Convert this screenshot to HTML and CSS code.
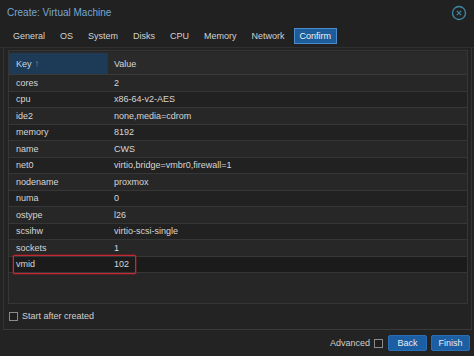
FILE: index.html
```html
<!DOCTYPE html>
<html>
<head>
<meta charset="utf-8">
<link rel="stylesheet" href="styles.css">
</head>
<body>
<div class="win">
  <div class="titlebar">
    <span class="title">Create: Virtual Machine</span>
    <span class="close">
      <svg width="16" height="16" viewBox="0 0 16 16"><circle cx="8" cy="8" r="6.5" fill="none" stroke="#3f8aa6" stroke-width="1.3"/><path d="M5.8 5.8 L10.2 10.2 M10.2 5.8 L5.8 10.2" stroke="#3f8aa6" stroke-width="1.2"/></svg>
    </span>
  </div>
  <div class="tabs">
    <span class="tab">General</span>
    <span class="tab">OS</span>
    <span class="tab">System</span>
    <span class="tab">Disks</span>
    <span class="tab">CPU</span>
    <span class="tab">Memory</span>
    <span class="tab">Network</span>
    <span class="tab active">Confirm</span>
  </div>
  <div class="panel">
    <div class="grid">
      <div class="ghead">
        <div class="c key">Key <span class="arrow">↑</span></div>
        <div class="c val">Value</div>
      </div>
      <div class="row"><div class="c key">cores</div><div class="c val">2</div></div>
      <div class="row dark"><div class="c key">cpu</div><div class="c val">x86-64-v2-AES</div></div>
      <div class="row"><div class="c key">ide2</div><div class="c val">none,media=cdrom</div></div>
      <div class="row dark"><div class="c key">memory</div><div class="c val">8192</div></div>
      <div class="row"><div class="c key">name</div><div class="c val">CWS</div></div>
      <div class="row dark"><div class="c key">net0</div><div class="c val">virtio,bridge=vmbr0,firewall=1</div></div>
      <div class="row"><div class="c key">nodename</div><div class="c val">proxmox</div></div>
      <div class="row dark"><div class="c key">numa</div><div class="c val">0</div></div>
      <div class="row"><div class="c key">ostype</div><div class="c val">l26</div></div>
      <div class="row dark"><div class="c key">scsihw</div><div class="c val">virtio-scsi-single</div></div>
      <div class="row"><div class="c key">sockets</div><div class="c val">1</div></div>
      <div class="row hl"><div class="c key">vmid</div><div class="c val">102</div><span class="mark"></span></div>
      <div class="filler"></div>
    </div>
    <div class="start"><span class="cb"></span><span>Start after created</span></div>
  </div>
  <div class="footer">
    <span class="adv">Advanced</span>
    <span class="cb"></span>
    <span class="btn back">Back</span>
    <span class="btn">Finish</span>
  </div>
</div>
</body>
</html>
```

FILE: styles.css
```css
* { box-sizing: border-box; }
html, body { margin: 0; padding: 0; }
body {
  width: 474px;
  height: 356px;
  background: #232323;
  font-family: "Liberation Sans", Arial, sans-serif;
  font-size: 9px;
  color: #d6d6d6;
  overflow: hidden;
}
.win { display: flex; flex-direction: column; height: 356px; }
.titlebar {
  height: 24px;
  display: flex;
  align-items: center;
  justify-content: space-between;
  padding: 0 7px 0 7px;
  background: #212121;
}
.title { font-size: 10px; color: #78a8d0; }
.close { display: flex; width: 16px; height: 16px; margin-top: 1px; }
.tabs {
  height: 24px;
  display: flex;
  align-items: flex-start;
  gap: 3px;
  padding: 4px 0 0 7px;
  border-bottom: 1px solid #303030;
  background: #212121;
}
.tab {
  height: 16px;
  line-height: 14px;
  padding: 0 5px;
  border: 1px solid transparent;
  color: #d2d2d2;
}
.tab.active {
  background: #1c5c98;
  border-color: #4a8ccc;
  color: #f2f2f2;
}
.panel {
  flex: 0 0 282px;
  margin: 0 2px 0 3px;
  border-left: 1px solid #333;
  border-right: 1px solid #333;
  border-bottom: 1px solid #3a3a3a;
  padding: 2px 3px 0 4px;
}
.grid {
  height: 254px;
  border: 1px solid #363636;
  display: flex;
  flex-direction: column;
  padding: 1px 0 0 0;
  background: #262626;
}
.ghead {
  height: 23px;
  display: flex;
  background: #2a2a2a;
  border-bottom: 1px solid #3a3a3a;
  padding-top: 1px;
}
.ghead .c { display: flex; align-items: center; }
.ghead .key { background: #1d3b57; color: #c9d4de; border-right: 1px solid #333; }
.arrow { margin-left: 3px; color: #6d8fae; font-size: 10px; }
.row {
  position: relative;
  height: 16.5px;
  display: flex;
  align-items: center;
  border-bottom: 1px solid #363636;
  background: #272727;
}
.row.dark { background: #212121; }
.row.hl { background: #1b1b1b; }
.c { white-space: nowrap; }
.key { width: 99px; padding-left: 7px; }
.val { padding-left: 6px; }
.mark {
  position: absolute;
  left: 4px;
  top: -2px;
  width: 123px;
  height: 19px;
  border: 1px solid #c22a33;
  box-shadow: 0 0 0 0.5px #8e1f26;
  border-radius: 1px;
}
.filler { flex: 1; background: #262626; }
.start {
  display: flex;
  align-items: center;
  gap: 4px;
  margin-top: 7px;
  padding-left: 1px;
  height: 10px;
  color: #d0d0d0;
}
.cb {
  display: inline-block;
  width: 9px;
  height: 9px;
  border: 1px solid #8a8a8a;
  background: #1e1e1e;
}
.footer {
  flex: 1;
  display: flex;
  align-items: center;
  justify-content: flex-end;
  padding: 0 4px 0 0;
  background: #232323;
}
.adv { margin-right: 4px; color: #cfcfcf; }
.footer .cb { margin-right: 5px; }
.btn {
  width: 39px;
  height: 16px;
  line-height: 14px;
  text-align: center;
  background: #1b5ea3;
  border: 1px solid #2a6fb5;
  border-radius: 2px;
  color: #e8eef5;
}
.back { margin-right: 4px; }
```
